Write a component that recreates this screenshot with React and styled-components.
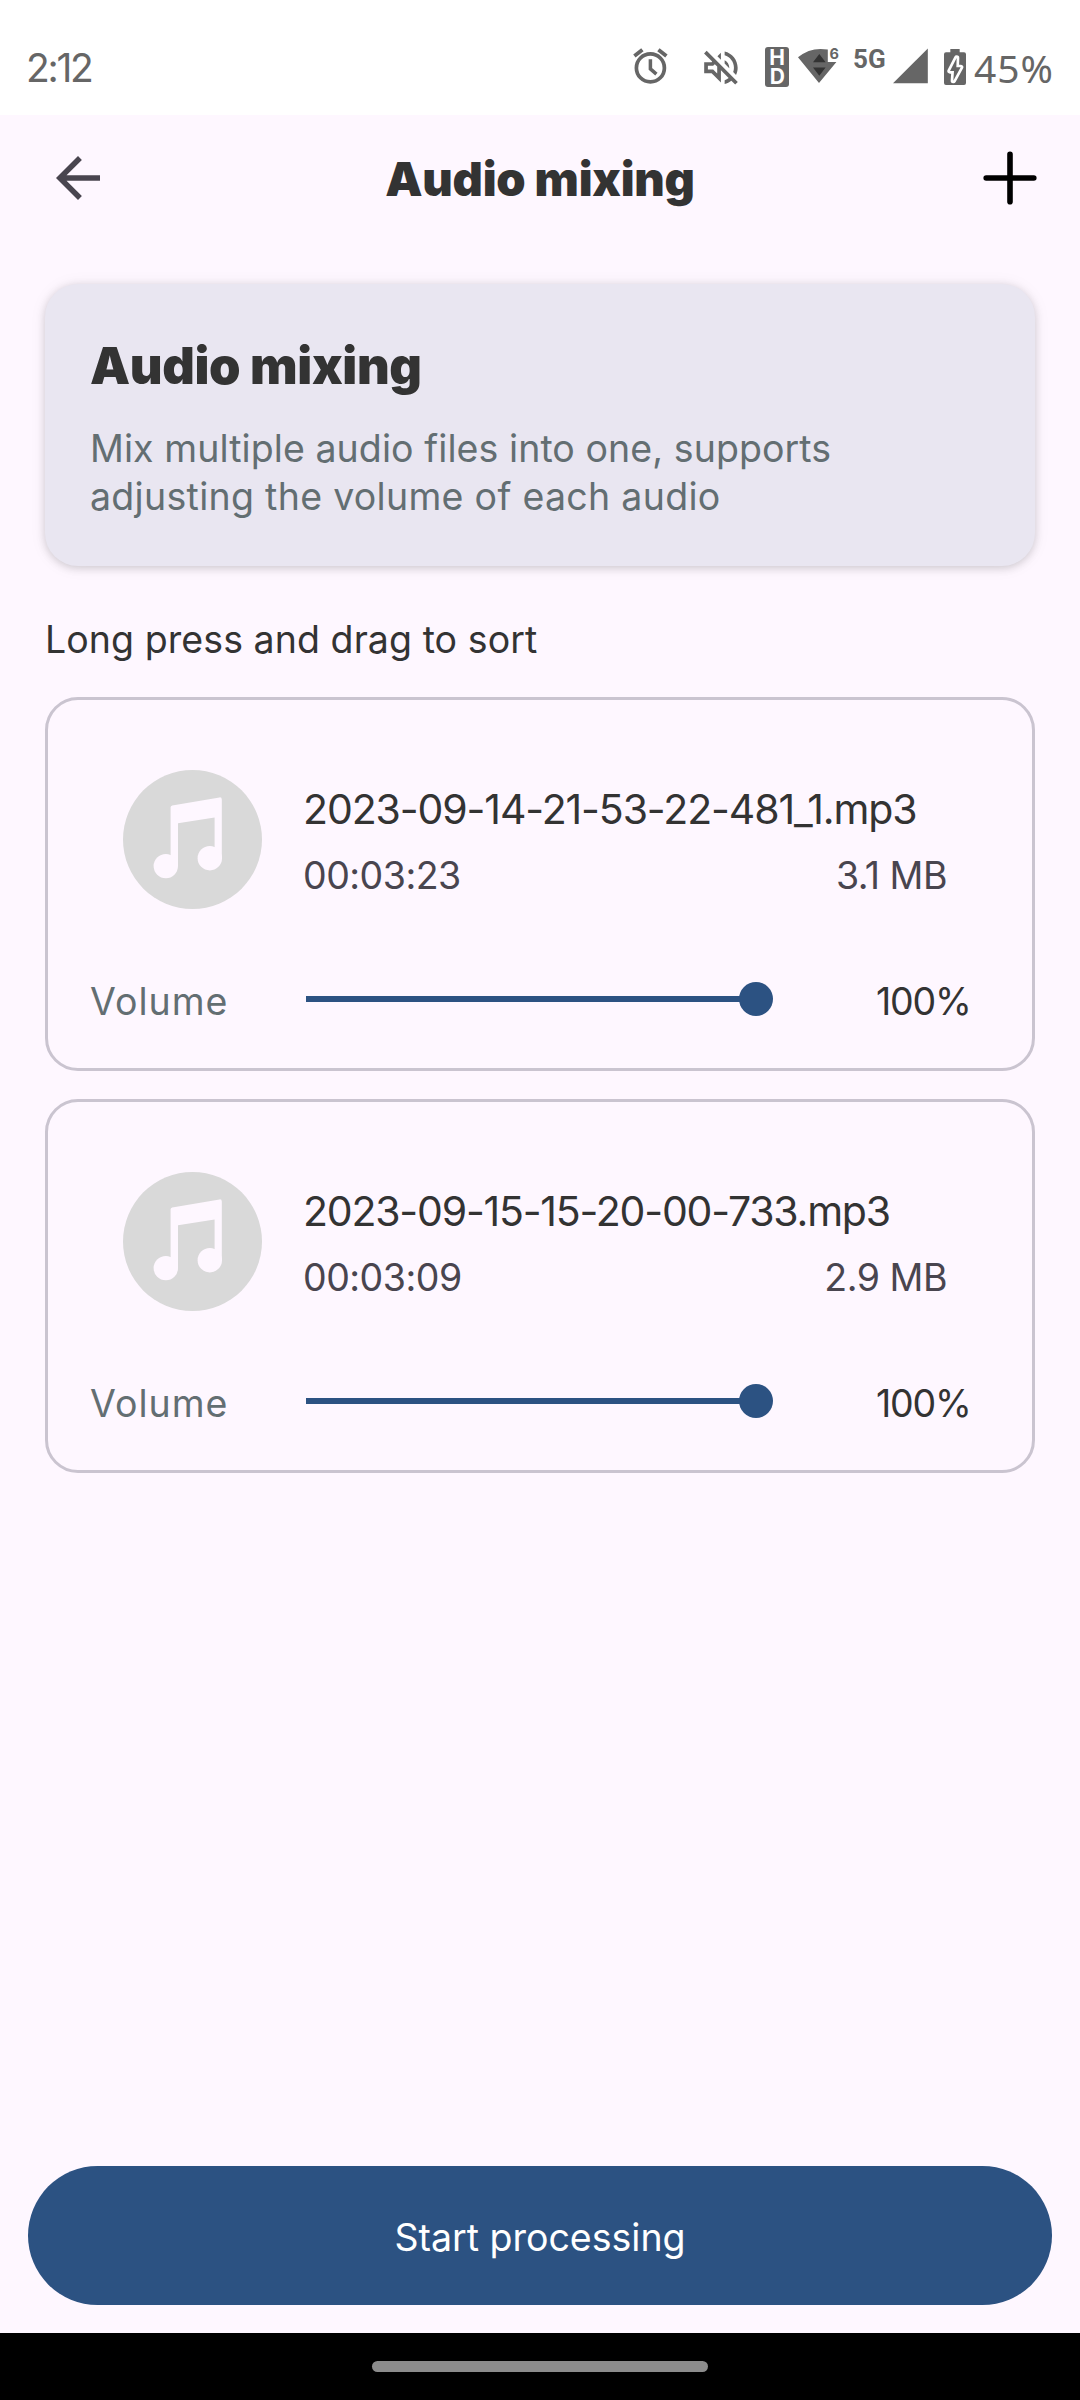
import React from "react";
import styled, { createGlobalStyle } from "styled-components";

const GlobalStyle = createGlobalStyle`
  * { box-sizing: border-box; }
  body { margin: 0; background: #fef7ff; }
  svg { display: block; flex: none; overflow: visible; }
`;

const Screen = styled.div`
  width: 1080px;
  height: 2400px;
  display: flex;
  flex-direction: column;
  overflow: hidden;
  background: #fef7ff;
  color: #333;
  font-family: Inter, "Liberation Sans", sans-serif;
`;

/* Status bar */
const StatusBar = styled.div`
  flex: none;
  height: 115px;
  padding: 19px 0 0 26px;
  display: flex;
  align-items: center;
  background: #fff;
  color: #666;
`;

const Clock = styled.div`
  padding-top: 2px;
  font-size: 39px;
  line-height: 48px;
  letter-spacing: -2.3px;
`;

const StatusIcons = styled.div`
  margin-left: auto;
  display: flex;
  align-items: center;
`;

const StatusIcon = styled.svg`
  width: ${(p) => p.$w}px;
  height: 40px;
  margin-left: ${(p) => p.$gap}px;
`;

const BatteryText = styled.div`
  width: 106px;
  padding: 2px 0 0 0;
  margin-left: 8px;
  font-family: "Noto Sans", sans-serif;
  font-size: 39px;
  line-height: 48px;
  letter-spacing: 1px;
`;

/* Header */
const Header = styled.header`
  flex: none;
  height: 125px;
  display: grid;
  grid-template-columns: 111px 1fr 111px;
  align-items: center;
`;

const IconButton = styled.button`
  border: 0;
  background: none;
  padding: 0 0 0 ${(p) => p.$inset}px;
  color: ${(p) => p.$color};
`;

const HeaderTitle = styled.h1`
  margin: 0;
  padding-top: 3px;
  text-align: center;
  font-size: 47px;
  font-weight: 900;
  line-height: 60px;
  letter-spacing: -0.25px;
`;

/* Content */
const Main = styled.main`
  flex: 1;
  padding: 44px 45px 0;
`;

const IntroCard = styled.section`
  height: 282px;
  padding: 51.6px 45px 0;
  border-radius: 33px;
  background: #e9e6f1;
  box-shadow: 0 2px 9px rgba(0, 0, 0, 0.16), 0 1px 18px rgba(0, 0, 0, 0.06);
`;

const IntroTitle = styled.h2`
  margin: 0 0 29px;
  font-size: 50.5px;
  font-weight: 900;
  line-height: 60px;
  letter-spacing: -0.35px;
`;

const IntroLine = styled.span`
  display: block;
  color: #636e72;
  font-size: 37.5px;
  line-height: 48px;
  letter-spacing: ${(p) => p.$track}px;
`;

const Hint = styled.p`
  margin: 50px 0 33px;
  font-size: 37.5px;
  line-height: 48px;
  letter-spacing: 0.07px;
`;

const TrackList = styled.div`
  display: flex;
  flex-direction: column;
  gap: 28px;
`;

const TrackCard = styled.article`
  height: 374px;
  padding-top: 70px;
  border: 3px solid #cac4d0;
  border-radius: 33px;
`;

const TrackHead = styled.div`
  display: flex;
  padding: 0 85px 0 75px;
  gap: 41px;
`;

const TrackInfo = styled.div`
  flex: 1;
  padding-top: 15px;
`;

const TrackName = styled.div`
  font-size: 41px;
  line-height: 48px;
  white-space: nowrap;
  letter-spacing: ${(p) => p.$track}px;
`;

const TrackMeta = styled.div`
  margin-top: 21px;
  display: flex;
  justify-content: space-between;
  color: #49454f;
  font-size: 37.5px;
  line-height: 44px;
  letter-spacing: -0.5px;
`;

const VolumeRow = styled.div`
  height: 60px;
  margin-top: 61px;
  padding-left: 42px;
  display: flex;
  align-items: center;
`;

const VolumeLabel = styled.div`
  width: 216px;
  padding-top: 4px;
  color: #636e72;
  font-size: 37.5px;
  line-height: 44px;
  letter-spacing: 0.99px;
`;

const Slider = styled.div`
  width: 467px;
  height: 34px;
  padding-right: 17px;
  margin: 0 103px 2px 0;
  display: flex;
  align-items: center;
`;

const SliderFill = styled.div`
  flex: none;
  height: 6px;
  background: #2c5282;
`;

const SliderThumb = styled.div`
  flex: none;
  width: 34px;
  height: 34px;
  margin-left: -17px;
  border-radius: 50%;
  background: #2c5282;
`;

const VolumeValue = styled.div`
  padding-top: 4px;
  font-size: 37.5px;
  line-height: 44px;
  letter-spacing: -1.19px;
`;

/* Footer */
const StartButton = styled.button`
  flex: none;
  height: 139px;
  margin: 0 28px 28px;
  padding: 4px 0 0;
  border: 0;
  border-radius: 70px;
  background: #2c5282;
  color: #fff;
  font-family: inherit;
  font-size: 37.5px;
`;

const NavBar = styled.div`
  flex: none;
  height: 67px;
  padding-top: 28px;
  background: #000;
`;

const NavHandle = styled.div`
  width: 336px;
  height: 11px;
  margin: 0 auto;
  border-radius: 6px;
  background: #8c8c8c;
`;

const AlarmIcon = () => (
  <StatusIcon $w={38} $gap={0} viewBox="632 47 38 40" fill="none" stroke="currentColor">
    <circle cx="650.4" cy="67.9" r="14" strokeWidth="3.7" />
    <path d="M650.4 59.3v9.6l6 5.2" strokeWidth="3.5" />
    <path d="M634.4 56l8-6.3M666.4 56l-8-6.3" strokeWidth="3.8" />
  </StatusIcon>
);

const MuteIcon = () => (
  <StatusIcon $w={36} $gap={32} viewBox="702 47 36 40" fill="currentColor">
    <path
      transform="translate(698.6 45.4) scale(1.86)"
      d="M4.34 2.93L2.93 4.34 7.29 8.7 7 9H3v6h4l5 5v-6.59l4.18 4.18c-.65.49-1.38.88-2.18 1.11v2.06c1.34-.3 2.57-.92 3.61-1.75l2.05 2.05 1.41-1.41L4.34 2.93zM10 15.17L7.83 13H5v-2h2.83l.88-.88L10 11.41v3.76zM19 12c0 .82-.15 1.61-.41 2.34l1.53 1.53c.56-1.17.88-2.48.88-3.87 0-4.28-2.99-7.86-7-8.77v2.06c2.89.86 5 3.54 5 6.71zm-7-8l-1.88 1.88L12 7.76V4zm4.5 8c0-1.77-1.02-3.29-2.5-4.03v1.79l2.48 2.48c.01-.08.02-.16.02-.24z"
    />
  </StatusIcon>
);

const HdIcon = () => (
  <StatusIcon $w={24} $gap={27} viewBox="0 0 24 40">
    <rect width="24" height="40" rx="3" fill="#666" />
    <g fill="#fff" fontFamily="Inter, sans-serif" fontWeight="700" fontSize="21" textAnchor="middle">
      <text x="12" y="18.4">H</text>
      <text x="12.3" y="36.6">D</text>
    </g>
  </StatusIcon>
);

const WifiIcon = () => (
  <StatusIcon $w={43} $gap={8} viewBox="797 47 43 40">
    <path d="M798 57.3Q811 46.5 827.8 49.6V62H836.4L819 83z" fill="#666" />
    <path d="M819.3 54l6.3 8.2h-12.6zM813 67.6h12.6l-6.3 8.2z" fill="#333" />
    <text x="829.6" y="59.2" fill="#666" fontFamily="Inter, sans-serif" fontWeight="700" fontSize="14.5">6</text>
  </StatusIcon>
);

const NetworkIcon = () => (
  <StatusIcon $w={35} $gap={12} viewBox="852 47 35 40">
    <text x="853" y="67.6" fill="#666" fontFamily="Roboto, sans-serif" fontWeight="700" fontSize="26">5G</text>
  </StatusIcon>
);

const SignalIcon = () => (
  <StatusIcon $w={36} $gap={5} viewBox="892 47 36 40">
    <path d="M893 83.3h34.8V48.6z" fill="#666" />
  </StatusIcon>
);

const BatteryIcon = () => (
  <StatusIcon $w={22} $gap={16} viewBox="372 81 66 120">
    <path d="M391 87h28v10h13q6 0 6 6v86q0 6-6 6h-54q-6 0-6-6v-86q0-6 6-6h13z" fill="#666" />
    <path
      d="M410 114l-20 39h12l-2 29 22-40h-13z"
      fill="#666"
      stroke="#fff"
      strokeWidth="16"
      paintOrder="stroke"
      strokeLinejoin="round"
    />
  </StatusIcon>
);

const BackIcon = () => (
  <svg width="66" height="66" viewBox="0 0 24 24" fill="currentColor">
    <path d="M20 11H7.83l5.59-5.59L12 4l-8 8 8 8 1.41-1.41L7.83 13H20v-2z" />
  </svg>
);

const PlusIcon = () => (
  <svg width="66" height="66" viewBox="0 0 66 66" stroke="currentColor" strokeWidth="5.6" strokeLinecap="round">
    <path d="M33 9.2v47.6M9.2 33h47.6" />
  </svg>
);

const MusicDisc = () => (
  <svg width="139" height="139" viewBox="0 0 139 139">
    <circle cx="69.5" cy="69.5" r="69.5" fill="#d9d9d9" />
    <g fill="#fef7ff">
      <path d="M47.6 37.3q0-1.6 1.6-1.9l47.3-8q2.3-.3 2.3 2V88h-7.2V47.6L55 53.2V96h-7.4z" />
      <circle cx="42.8" cy="96.1" r="12.2" />
      <circle cx="86.8" cy="88.2" r="12.2" />
    </g>
  </svg>
);

const tracks = [
  { name: "2023-09-14-21-53-22-481_1.mp3", tracking: -1.11, duration: "00:03:23", size: "3.1 MB", volume: 100 },
  { name: "2023-09-15-15-20-00-733.mp3", tracking: -1.21, duration: "00:03:09", size: "2.9 MB", volume: 100 },
];

function Track({ track }) {
  return (
    <TrackCard>
      <TrackHead>
        <MusicDisc />
        <TrackInfo>
          <TrackName $track={track.tracking}>{track.name}</TrackName>
          <TrackMeta>
            <span>{track.duration}</span>
            <span>{track.size}</span>
          </TrackMeta>
        </TrackInfo>
      </TrackHead>
      <VolumeRow>
        <VolumeLabel>Volume</VolumeLabel>
        <Slider>
          <SliderFill style={{ width: `${track.volume}%` }} />
          <SliderThumb />
        </Slider>
        <VolumeValue>{track.volume}%</VolumeValue>
      </VolumeRow>
    </TrackCard>
  );
}

export default function App() {
  return (
    <Screen>
      <GlobalStyle />
      <StatusBar>
        <Clock>2:12</Clock>
        <StatusIcons>
          <AlarmIcon />
          <MuteIcon />
          <HdIcon />
          <WifiIcon />
          <NetworkIcon />
          <SignalIcon />
          <BatteryIcon />
          <BatteryText>45%</BatteryText>
        </StatusIcons>
      </StatusBar>
      <Header>
        <IconButton $inset={45} $color="#49454f" aria-label="Back">
          <BackIcon />
        </IconButton>
        <HeaderTitle>Audio mixing</HeaderTitle>
        <IconButton $inset={8} $color="#000" aria-label="Add">
          <PlusIcon />
        </IconButton>
      </Header>
      <Main>
        <IntroCard>
          <IntroTitle>Audio mixing</IntroTitle>
          <IntroLine $track={0.08}>Mix multiple audio files into one, supports</IntroLine>
          <IntroLine $track={0.3}>adjusting the volume of each audio</IntroLine>
        </IntroCard>
        <Hint>Long press and drag to sort</Hint>
        <TrackList>
          {tracks.map((t) => (
            <Track key={t.name} track={t} />
          ))}
        </TrackList>
      </Main>
      <StartButton>Start processing</StartButton>
      <NavBar>
        <NavHandle />
      </NavBar>
    </Screen>
  );
}
